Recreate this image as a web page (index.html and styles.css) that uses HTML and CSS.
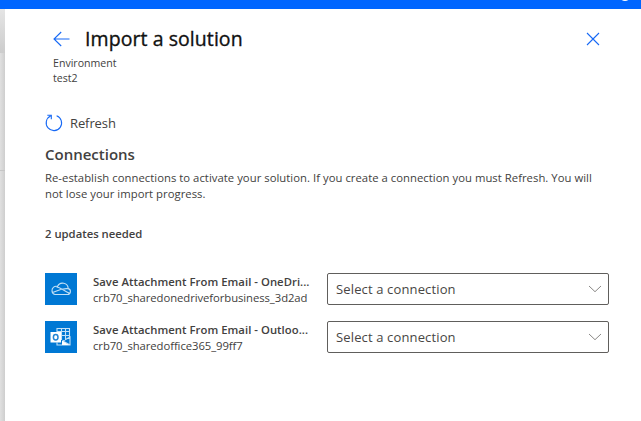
FILE: index.html
```html
<!DOCTYPE html>
<html lang="en">
<head>
<meta charset="utf-8">
<title>Import a solution</title>
<link rel="stylesheet" href="styles.css">
</head>
<body>
<header class="topbar"><span class="topbar-icon"></span></header>
<div class="shell">
  <aside class="backdrop"><div class="backdrop-head"></div><div class="backdrop-row"></div></aside>
  <main class="panel">
    <div class="title-row">
      <svg class="back" width="18" height="16" viewBox="0 0 18 16"><path d="M8.2 1 1 8l7.200 7M1 8h15.500"/></svg>
      <h1>Import a solution</h1>
      <svg class="close" width="14" height="14" viewBox="0 0 14 14"><path d="M1 1l12 12M13 1 1 13"/></svg>
    </div>
    <div class="env"><div>Environment</div><div>test2</div></div>
    <div class="refresh">
      <svg width="18" height="18" viewBox="0 0 18 18"><path d="M11.600 1.700A7.700 7.700 0 1 1 5.500 2M2.300 1.300h4v4"/></svg>
      <span>Refresh</span>
    </div>
    <h2>Connections</h2>
    <p class="desc">Re-establish connections to activate your solution. If you create a connection you must Refresh. You will<br>not lose your import progress.</p>
    <p class="updates">2 updates needed</p>
    <div class="item">
      <div class="tile">
        <svg width="32" height="32" viewBox="0 0 32 32"><path d="M10 21.500h12.500a3 3 0 0 0 .7-5.900 5.600 5.600 0 0 0-10.700-2.100 4.200 4.200 0 0 0-5.500 4.300 3.700 3.700 0 0 0 3 3.700zM11.500 14c3.200.2 6.800 3.300 13 6.300M7.500 19.500c4.500-1.500 8.500-4.500 15.500-3.800"/></svg>
      </div>
      <div class="label"><div class="name">Save Attachment From Email - OneDri...</div><div class="ref">crb70_sharedonedriveforbusiness_3d2ad</div></div>
      <div class="select"><span>Select a connection</span><svg width="14" height="8" viewBox="0 0 14 8"><path d="M1 1l6 5.700L13 1"/></svg></div>
    </div>
    <div class="item">
      <div class="tile">
        <svg width="32" height="32" viewBox="0 0 32 32"><path d="M12 11V7.500h12.500V18M12 10.500h12.500M16.500 7.500V19M20.500 7.500V19M16 14.500h8.500M12 21.500V24h13v-8l-7 4 7 4"/><path class="solid" d="M5.500 11h10.500v10.500H5.500zM17 19.500l7 4.500h-7z"/><ellipse class="o-mark" cx="10.700" cy="16.200" rx="2.300" ry="2.700"/></svg>
      </div>
      <div class="label"><div class="name">Save Attachment From Email - Outloo...</div><div class="ref">crb70_sharedoffice365_99ff7</div></div>
      <div class="select"><span>Select a connection</span><svg width="14" height="8" viewBox="0 0 14 8"><path d="M1 1l6 5.700L13 1"/></svg></div>
    </div>
  </main>
</div>
</body>
</html>
```
FILE: styles.css
```css
* { box-sizing: border-box; }
body { margin: 0; height: 421px; overflow: hidden; background: #fff; color: #424140; font: 11.3px/16px "Open Sans", "Noto Sans", sans-serif; }
h1, h2, p { margin: 0; }
svg { display: block; fill: none; flex: none; }
h1, p, span, .label { white-space: nowrap; }
.topbar { height: 9px; background: #0066ff; overflow: hidden; display: flex; justify-content: flex-end; }
.topbar-icon { width: 12px; height: 12px; margin: -11px 10px 0 0; border-radius: 50%; background: #fff; }
.shell { display: flex; height: 412px; }
.backdrop { width: 5px; flex: none; background: linear-gradient(90deg, #e0e0e0, #cecece); }
.backdrop-head { height: 44px; background: linear-gradient(#e5e5e5, #cccccc); }
.backdrop-row { height: 118px; border-bottom: 1px solid #c6c6c6; }
.panel { flex: 1; padding: 18px 32px 0 40px; background: #fff; }
.title-row { display: flex; align-items: center; height: 24px; padding: 0 9px 0 8px; }
.back, .close, .refresh svg { stroke: #1769f5; stroke-width: 1.1; }
.close { margin-left: auto; }
h1 { margin-left: 14px; font-size: 19.500px; line-height: 24px; font-weight: 400; letter-spacing: 0.07px; color: #111; -webkit-text-stroke: 0.35px #111; }
.env { margin: 5px 0 0 8px; font-size: 10.600px; line-height: 15px; }
.refresh { display: flex; align-items: center; gap: 7px; height: 24px; margin-top: 25px; font-size: 13px; letter-spacing: -0.1px; }
h2 { margin-top: 9px; font-size: 15px; line-height: 20px; font-weight: 600; }
.desc { margin-top: 6px; line-height: 16px; letter-spacing: 0.028px; }
.updates { margin-top: 24px; font-weight: 600; line-height: 16px; }
.item { display: flex; height: 32px; margin-top: 16px; }
.updates + .item { margin-top: 31px; }
.tile { width: 32px; height: 32px; background: #0078d4; }
.tile svg { stroke: #c4e1f6; stroke-width: 1.1; }
.tile .solid { fill: #fff; stroke: none; }
.tile .o-mark { stroke: #2385d4; stroke-width: 1.500; }
.label { width: 250px; flex: none; padding: 1px 0 0 16px; }
.name { font-weight: 600; letter-spacing: 0.04px; }
.ref { letter-spacing: -0.07px; }
.select { display: flex; flex: none; width: 282px; height: 32px; align-items: center; justify-content: space-between; padding: 0 6px 0 8px; border: 1px solid #605e5c; border-radius: 2px; font-size: 13px; letter-spacing: 0.14px; color: #484644; }
.select svg { stroke: #8a8886; stroke-width: 1; }
```
